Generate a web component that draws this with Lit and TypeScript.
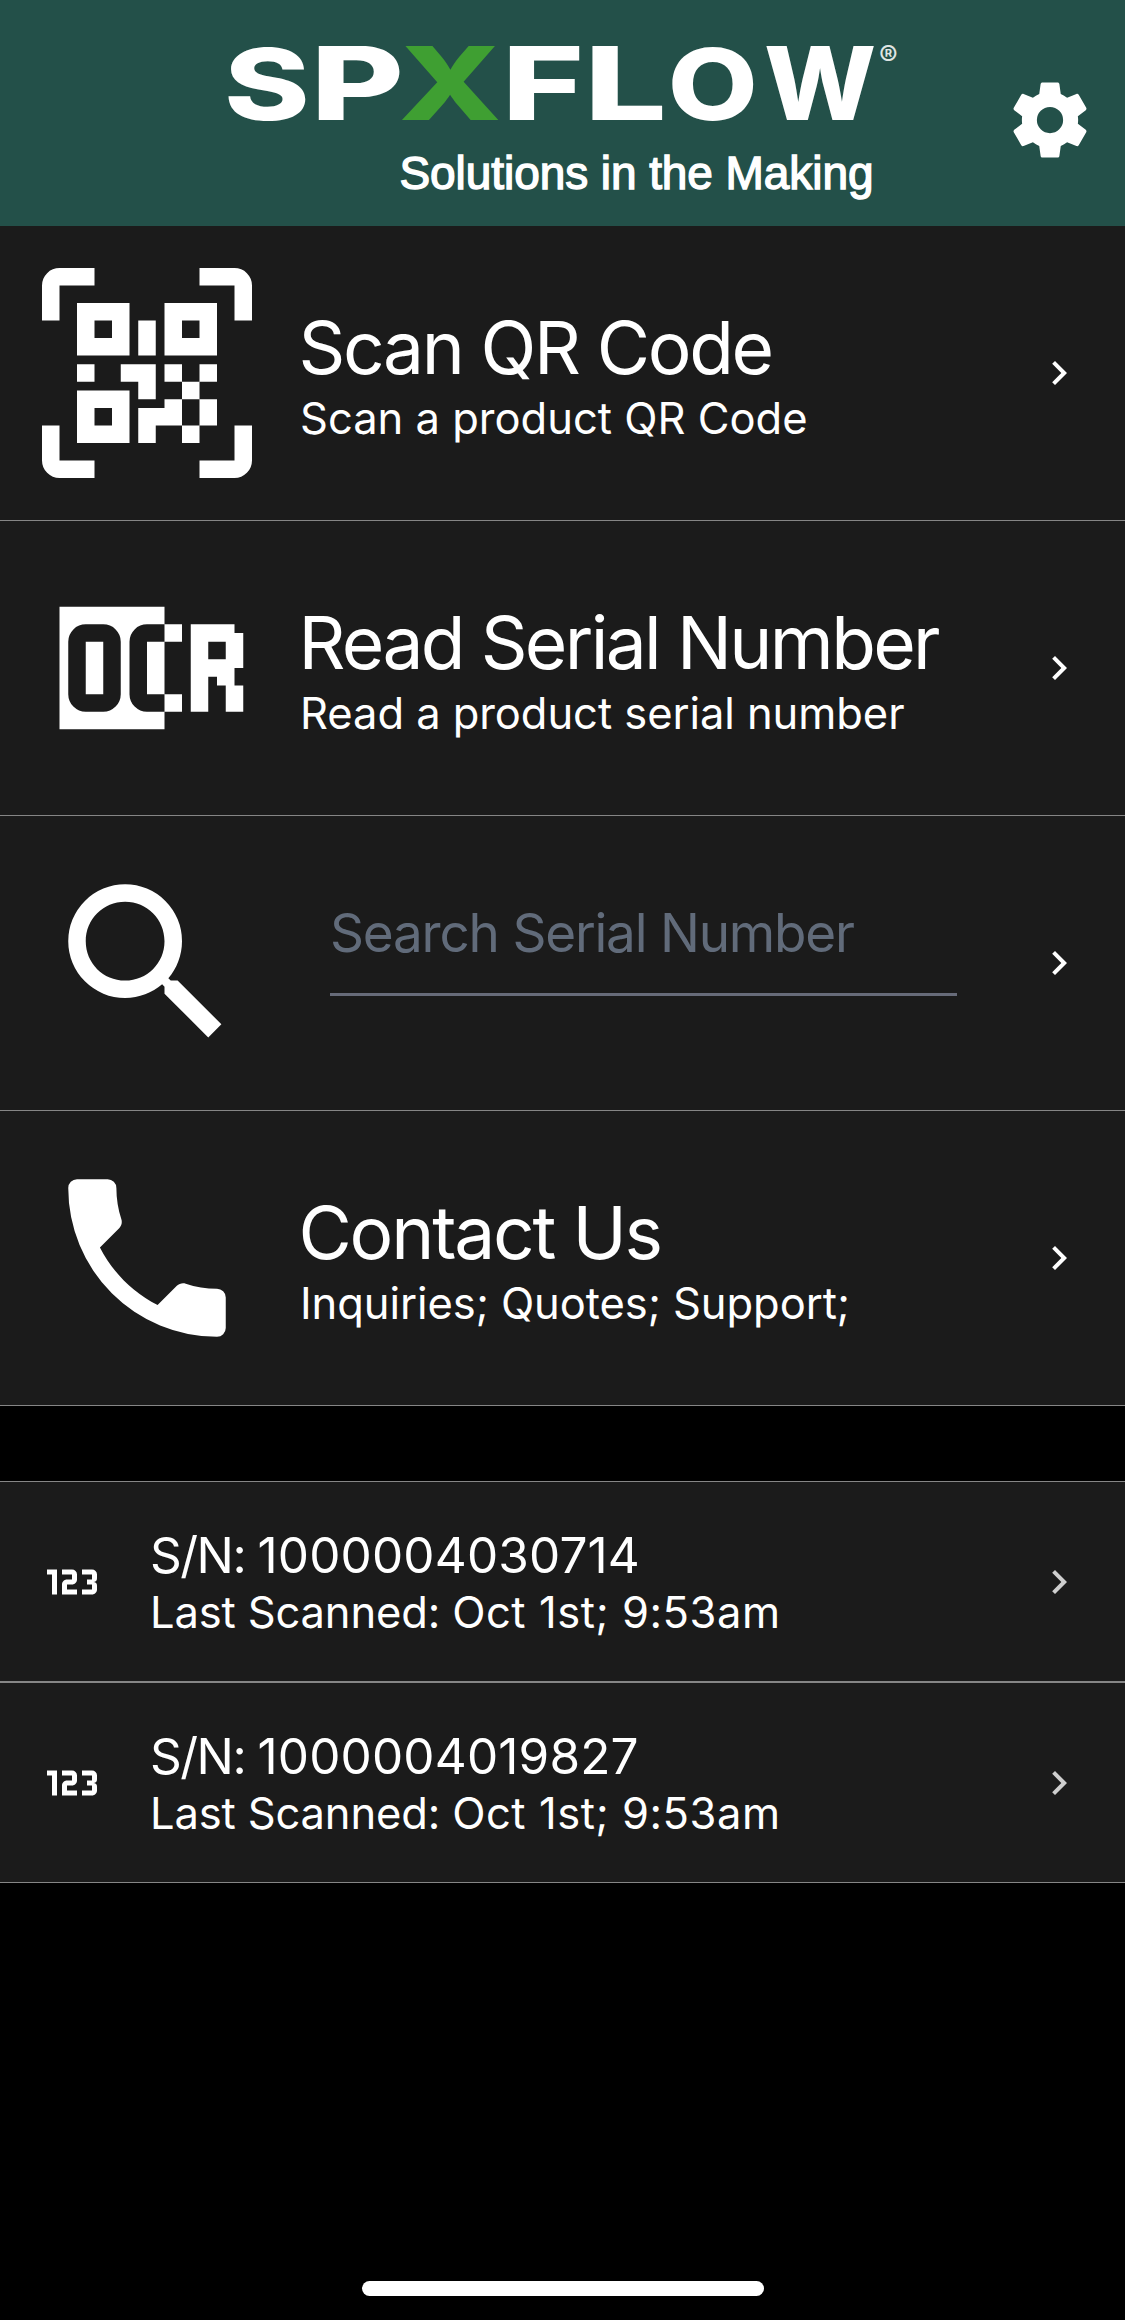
import { LitElement, html, svg, css } from "lit";
import { customElement, property } from "lit/decorators.js";

const ICONS: Record<string, string> = {
  cog: "M12,15.5A3.5,3.5 0 0,1 8.5,12A3.5,3.5 0 0,1 12,8.5A3.5,3.5 0 0,1 15.5,12A3.5,3.5 0 0,1 12,15.5M19.43,12.97C19.47,12.65 19.5,12.33 19.5,12C19.5,11.67 19.47,11.34 19.43,11L21.54,9.37C21.73,9.22 21.78,8.95 21.66,8.73L19.66,5.27C19.54,5.05 19.27,4.96 19.05,5.05L16.56,6.05C16.04,5.66 15.5,5.32 14.87,5.07L14.5,2.42C14.46,2.18 14.25,2 14,2H10C9.75,2 9.54,2.18 9.5,2.42L9.13,5.07C8.5,5.32 7.96,5.66 7.44,6.05L4.95,5.05C4.73,4.96 4.46,5.05 4.34,5.27L2.34,8.73C2.21,8.95 2.27,9.22 2.46,9.37L4.57,11C4.53,11.34 4.5,11.67 4.5,12C4.5,12.33 4.53,12.65 4.57,12.97L2.46,14.63C2.27,14.78 2.21,15.05 2.34,15.27L4.34,18.73C4.46,18.95 4.73,19.03 4.95,18.95L7.44,17.94C7.96,18.34 8.5,18.68 9.13,18.93L9.5,21.58C9.54,21.82 9.75,22 10,22H14C14.25,22 14.46,21.82 14.5,21.58L14.87,18.93C15.5,18.67 16.04,18.34 16.56,17.94L19.05,18.95C19.27,19.03 19.54,18.95 19.66,18.73L21.66,15.27C21.78,15.05 21.73,14.78 21.54,14.63L19.43,12.97Z",
  qrcodeScan: "M4,4H10V10H4V4M20,4V10H14V4H20M14,15H16V13H14V11H16V13H18V11H20V13H18V15H20V18H18V20H16V18H13V20H11V16H14V15M16,15V18H18V15H16M4,20V14H10V20H4M6,6V8H8V6H6M16,6V8H18V6H16M6,16V18H8V16H6M4,11H6V13H4V11M9,11H13V15H11V13H9V11M11,6H13V10H11V6M2,2V6H0V2A2,2 0 0,1 2,0H6V2H2M22,0A2,2 0 0,1 24,2V6H22V2H18V0H22M2,18V22H6V24H2A2,2 0 0,1 0,22V18H2M22,22V18H24V22A2,2 0 0,1 22,24H18V22H22Z",
  ocr: "M2,5H14V7H12A2,2 0 0,0 10,9V15A2,2 0 0,0 12,17H14V19H2V5M5,7A2,2 0 0,0 3,9V15A2,2 0 0,0 5,17H7A2,2 0 0,0 9,15V9A2,2 0 0,0 7,7H5M5,9H7V15H5V9M12,9H14V15H12V9M14,7H16V9H14V7M14,15H16V17H14V15M17,7H22V8H23V12H22V14H23V17H21V14H20V13H19V17H17V7M19,9V11H21V9H19Z",
  magnify: "M9.5,3A6.5,6.5 0 0,1 16,9.5C16,11.11 15.41,12.59 14.44,13.73L14.71,14H15.5L20.5,19L19,20.5L14,15.5V14.71L13.73,14.44C12.59,15.41 11.11,16 9.5,16A6.5,6.5 0 0,1 3,9.5A6.5,6.5 0 0,1 9.5,3M9.5,5C7,5 5,7 5,9.5C5,12 7,14 9.5,14C12,14 14,12 14,9.5C14,7 12,5 9.5,5Z",
  phone: "M6.62,10.79C8.06,13.62 10.38,15.94 13.21,17.38L15.41,15.18C15.69,14.9 16.08,14.82 16.43,14.93C17.55,15.3 18.75,15.5 20,15.5A1,1 0 0,1 21,16.5V20A1,1 0 0,1 20,21A17,17 0 0,1 3,4A1,1 0 0,1 4,3H7.5A1,1 0 0,1 8.5,4C8.5,5.25 8.7,6.45 9.07,7.57C9.18,7.92 9.1,8.31 8.82,8.59L6.62,10.79Z",
  numeric: "M4,17V9H2V7H6V17H4M22,15C22,16.11 21.1,17 20,17H16V15H20V13H18V11H20V9H16V7H20A2,2 0 0,1 22,9V10.5A1.5,1.5 0 0,1 20.5,12A1.5,1.5 0 0,1 22,13.5V15M14,15V17H8V13C8,11.89 8.9,11 10,11H12V9H8V7H12A2,2 0 0,1 14,9V11C14,12.11 13.1,13 12,13H10V15H14Z",
  chevronRight: "M8.59,16.58L13.17,12L8.59,7.41L10,6L16,12L10,18L8.59,16.58Z",
};

@customElement("app-icon")
class AppIcon extends LitElement {
  @property() name = "";
  static styles = css`
    :host { display: block; flex: none; }
    .glyph { display: block; width: 100%; height: 100%; fill: currentColor; }
  `;
  render() {
    return html`<svg class="glyph" viewBox="0 0 24 24"><path fill-rule="evenodd" d=${ICONS[this.name] ?? ""}></path></svg>`;
  }
}

interface LogoLetter { ch: string; x: number; bearing: number; sx: number; sy: number; y: number; }

// Each letter is stretched to the extended proportions of the wordmark.
const LETTERS: LogoLetter[] = [
  { ch: "S", x: 0, bearing: 3, sx: 1.3, sy: 0.99, y: 74.5 },
  { ch: "P", x: 90, bearing: 5, sx: 1.43, sy: 1.023, y: 75 },
  { ch: "X", x: 173.5, bearing: 2, sx: 1.35, sy: 1.023, y: 75 },
  { ch: "F", x: 281, bearing: 5, sx: 1.4, sy: 1.023, y: 75 },
  { ch: "L", x: 363.5, bearing: 5, sx: 1.46, sy: 1.023, y: 75 },
  { ch: "O", x: 444.5, bearing: 4, sx: 1.165, sy: 0.99, y: 74.5 },
  { ch: "W", x: 538, bearing: 2, sx: 1.06, sy: 1.023, y: 75 },
];

@customElement("brand-logo")
class BrandLogo extends LitElement {
  static styles = css`
    :host { display: block; }
    .logo { display: block; width: 670px; height: 152px; overflow: visible; fill: #fff; }
    .letter { font: 800 100px Inter, sans-serif; }
    .accent { fill: #3f9f32; }
    .reg { font: 500 28px Inter, sans-serif; opacity: 0.85; }
    .tagline { font: 400 46px "Liberation Sans", Arial, sans-serif; stroke: #fff; stroke-width: 1.4px; }
  `;
  render() {
    return html`<svg class="logo" viewBox="0 0 670 152">
      ${LETTERS.map((l) => svg`<text class=${l.ch === "X" ? "letter accent" : "letter"} x=${-l.bearing}
        transform="translate(${l.x} ${l.y}) scale(${l.sx} ${l.sy})">${l.ch}</text>`)}
      <text class="reg" x="651" y="21">®</text>
      <text class="tagline" x="171.5" y="144" textLength="474" lengthAdjust="spacing">Solutions in the Making</text>
    </svg>`;
  }
}

interface MenuItem { icon: string; title: string; sub: string; titleTrack: number; subTrack: number; search?: boolean; }

const MENU: MenuItem[] = [
  { icon: "qrcodeScan", title: "Scan QR Code", sub: "Scan a product QR Code", titleTrack: -2.36, subTrack: 0 },
  { icon: "ocr", title: "Read Serial Number", sub: "Read a product serial number", titleTrack: -2.65, subTrack: -0.06 },
  { icon: "magnify", title: "Search Serial Number", sub: "", titleTrack: 0, subTrack: 0, search: true },
  { icon: "phone", title: "Contact Us", sub: "Inquiries; Quotes; Support;", titleTrack: -2.2, subTrack: -0.06 },
];

const HISTORY = [
  { serial: "1000004030714", scanned: "Oct 1st; 9:53am" },
  { serial: "1000004019827", scanned: "Oct 1st; 9:53am" },
];

@customElement("app-root")
class AppRoot extends LitElement {
  static styles = css`
    :host { display: block; }
    .screen {
      display: flex; flex-direction: column; box-sizing: border-box; width: 1125px; height: 2320px;
      overflow: hidden; background: #000; color: #fff; font-family: Inter, "Liberation Sans", sans-serif;
      white-space: nowrap;
    }
    .header {
      display: grid; grid-template-columns: 1fr 670px 1fr; align-items: start; box-sizing: border-box;
      flex: none; height: 226px; padding-top: 45px; background: #235049;
    }
    .brand { grid-column: 2; }
    .settings { width: 90px; height: 90px; justify-self: end; margin: 30px 30px 0 0; }
    .row {
      display: flex; align-items: center; box-sizing: border-box; flex: none; padding: 0 42px;
      background: #1b1b1b; border-bottom: 1px solid #868686;
    }
    .menu-row { height: 295px; }
    .menu-icon { width: 210px; height: 210px; margin-right: 48px; }
    .body { flex: 1; min-width: 0; }
    .title { margin-left: -1.5px; padding-top: 2px; font-size: 73px; line-height: 90px; }
    .sub { font-size: 43.5px; line-height: 54px; }
    .title + .sub { margin-top: -2px; }
    .field {
      align-self: flex-start; box-sizing: border-box; width: 627px; height: 95px; margin: 85px auto 0 30px;
      border-bottom: 3px solid #676b79; color: #616b7a; font-size: 53px; line-height: 64px;
      letter-spacing: -1.2px;
    }
    .chevron { width: 48px; height: 48px; }
    .history { display: flex; flex-direction: column; margin-top: 75px; }
    .history-row { height: 201px; border-top: 1px solid #868686; }
    .history-icon { width: 60px; height: 60px; margin-right: 48px; }
    .serial { font-size: 49.5px; line-height: 60px; letter-spacing: 0.15px; }
    .serial-label { letter-spacing: -1.5px; }
    .scanned { letter-spacing: 0.55px; }
    .scanned-label { letter-spacing: -0.15px; }
    .dim { color: #cfcfcf; }
    .home { width: 402px; height: 15px; margin: auto auto 24px; border-radius: 8px; background: #fff; }
  `;

  private menuBody(m: MenuItem) {
    return m.search
      ? html`<div class="field">${m.title}</div>`
      : html`<div class="body">
          <div class="title" style="letter-spacing:${m.titleTrack}px">${m.title}</div>
          <div class="sub" style="letter-spacing:${m.subTrack}px">${m.sub}</div>
        </div>`;
  }

  render() {
    return html`<div class="screen">
      <header class="header">
        <brand-logo class="brand"></brand-logo>
        <app-icon class="settings" name="cog"></app-icon>
      </header>
      ${MENU.map((m) => html`<div class="row menu-row">
        <app-icon class="menu-icon" name=${m.icon}></app-icon>
        ${this.menuBody(m)}
        <app-icon class="chevron" name="chevronRight"></app-icon>
      </div>`)}
      <div class="history">
        ${HISTORY.map((h) => html`<div class="row history-row">
          <app-icon class="history-icon" name="numeric"></app-icon>
          <div class="body">
            <div class="serial"><span class="serial-label">S/N: </span>${h.serial}</div>
            <div class="sub scanned"><span class="scanned-label">Last Scanned: </span>${h.scanned}</div>
          </div>
          <app-icon class="chevron dim" name="chevronRight"></app-icon>
        </div>`)}
      </div>
      <div class="home"></div>
    </div>`;
  }
}
